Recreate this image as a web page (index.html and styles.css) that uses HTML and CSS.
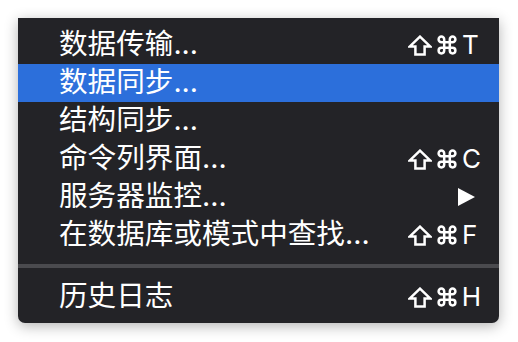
FILE: index.html
```html
<!DOCTYPE html>
<html>

<head>
    <title>Context Menu</title>

    <link rel="stylesheet" href="styles.css">
</head>

<body>

    <ul class="menu">
        <li class="menu-item">
            <span class="label">数据传输...</span>
            <span class="keys"><span class="mods"><svg class="shift" viewBox="0 0 24 21"><path d="M12 1.6 L22.4 11.6 H16.6 V19.6 H7.4 V11.6 H1.6 Z"/></svg><svg class="cmd" viewBox="0 0 20 20"><path d="M7.2 7.2 V4.4 A2.8 2.8 0 1 0 4.4 7.2 H15.6 A2.8 2.8 0 1 0 12.8 4.4 V15.6 A2.8 2.8 0 1 0 15.6 12.8 H4.4 A2.8 2.8 0 1 0 7.2 15.6 Z"/></svg></span><span class="key">T</span></span>
        </li>
        <li class="menu-item active">
            <span class="label">数据同步...</span>
        </li>
        <li class="menu-item">
            <span class="label">结构同步...</span>
        </li>
        <li class="menu-item">
            <span class="label">命令列界面...</span>
            <span class="keys"><span class="mods"><svg class="shift" viewBox="0 0 24 21"><path d="M12 1.6 L22.4 11.6 H16.6 V19.6 H7.4 V11.6 H1.6 Z"/></svg><svg class="cmd" viewBox="0 0 20 20"><path d="M7.2 7.2 V4.4 A2.8 2.8 0 1 0 4.4 7.2 H15.6 A2.8 2.8 0 1 0 12.8 4.4 V15.6 A2.8 2.8 0 1 0 15.6 12.8 H4.4 A2.8 2.8 0 1 0 7.2 15.6 Z"/></svg></span><span class="key">C</span></span>
        </li>
        <li class="menu-item">
            <span class="label">服务器监控...</span>
            <span class="keys submenu"><span class="arrow"></span></span>
        </li>
        <li class="menu-item">
            <span class="label">在数据库或模式中查找...</span>
            <span class="keys"><span class="mods"><svg class="shift" viewBox="0 0 24 21"><path d="M12 1.6 L22.4 11.6 H16.6 V19.6 H7.4 V11.6 H1.6 Z"/></svg><svg class="cmd" viewBox="0 0 20 20"><path d="M7.2 7.2 V4.4 A2.8 2.8 0 1 0 4.4 7.2 H15.6 A2.8 2.8 0 1 0 12.8 4.4 V15.6 A2.8 2.8 0 1 0 15.6 12.8 H4.4 A2.8 2.8 0 1 0 7.2 15.6 Z"/></svg></span><span class="key">F</span></span>
        </li>
        <li class="separator"></li>
        <li class="menu-item">
            <span class="label">历史日志</span>
            <span class="keys"><span class="mods"><svg class="shift" viewBox="0 0 24 21"><path d="M12 1.6 L22.4 11.6 H16.6 V19.6 H7.4 V11.6 H1.6 Z"/></svg><svg class="cmd" viewBox="0 0 20 20"><path d="M7.2 7.2 V4.4 A2.8 2.8 0 1 0 4.4 7.2 H15.6 A2.8 2.8 0 1 0 12.8 4.4 V15.6 A2.8 2.8 0 1 0 15.6 12.8 H4.4 A2.8 2.8 0 1 0 7.2 15.6 Z"/></svg></span><span class="key">H</span></span>
        </li>
    </ul>

</body>

</html>
```

FILE: styles.css
```css
* {
    margin: 0;
    padding: 0;
    box-sizing: border-box;
}

html,
body {
    width: 100%;
    height: 100%;
}

body {
    background-color: #fff;
    padding: 18px;
    font-family: "Inter", "Noto Sans CJK SC", sans-serif;
}

.menu {
    list-style-type: none;
    width: 481px;
    padding: 8px 0 7px 0;
    background-color: #232327;
    border-radius: 0 0 7px 7px;
    box-shadow: 0 3px 14px rgba(0, 0, 0, 0.3);
    color: #fff;
}

.menu-item {
    display: flex;
    align-items: center;
    height: 38px;
    padding: 0 18px 0 41px;
}

.menu-item.active {
    background-color: #2c6fdb;
}

.label {
    flex: 1;
    font-size: 28.6px;
    line-height: 1;
    padding-bottom: 2px;
    white-space: nowrap;
}

.keys {
    display: flex;
    align-items: center;
    width: 73px;
}

.mods {
    display: flex;
    align-items: center;
    gap: 5px;
    width: 54px;
}

.mods svg {
    fill: none;
    stroke: #fff;
    stroke-width: 2.5;
}

.shift {
    width: 24px;
    height: 21px;
}

.cmd {
    width: 20px;
    height: 20px;
}

.key {
    font-size: 26px;
    line-height: 1;
}

.submenu {
    justify-content: flex-end;
    padding-right: 6px;
}

.arrow {
    width: 0;
    height: 0;
    border-top: 9.5px solid transparent;
    border-bottom: 9.5px solid transparent;
    border-left: 17px solid #fff;
}

.separator {
    height: 4px;
    margin: 10px 0;
    background-color: #4a4a4e;
}
```
